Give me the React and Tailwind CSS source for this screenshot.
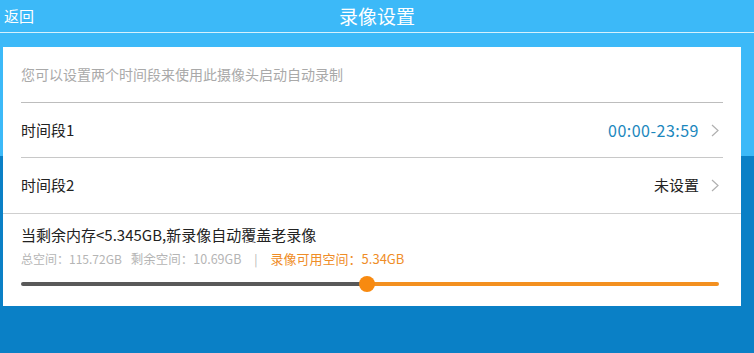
import React from "react";

function Chevron() {
  return (
    <svg width="8" height="13" viewBox="0 0 8 13" className="ml-[12px]">
      <path d="M1 1 L7 6.5 L1 12" fill="none" stroke="#b0b0b0" strokeWidth="1.2" />
    </svg>
  );
}

export default function App() {
  return (
    <div
      className="w-[754px] h-[353px] overflow-hidden bg-[linear-gradient(to_bottom,#3cb9f8_156px,#0a80c6_156px)]"
      style={{ fontFamily: '"Noto Sans CJK SC", "Noto Sans", sans-serif' }}
    >
      {/* header */}
      <div className="relative h-[33px] flex items-center justify-center border-b border-[#d6f1fd]">
        <span className="absolute left-[4px] top-[5px] text-[15px] text-white leading-[22px]">返回</span>
        <span className="text-[19px] text-white leading-[26px]">录像设置</span>
      </div>

      {/* card */}
      <div className="ml-[3px] mt-[14px] w-[738px] h-[259px] bg-white flex flex-col">
        <div className="mx-[18px] h-[56px] flex items-center border-b border-[#bdbdbd] text-[14px] text-[#a9a9a9]">
          您可以设置两个时间段来使用此摄像头启动自动录制
        </div>

        <div className="mx-[18px] h-[55px] flex items-center border-b border-[#c8c8c8]">
          <span className="text-[15px] text-[#222]">时间段1</span>
          <span className="ml-auto text-[16px] tracking-[0.5px] text-[#1b87bd]">00:00-23:59</span>
          <Chevron />
          <span className="w-[4px]" />
        </div>

        <div className="h-[56px] border-b border-[#cfcfcf] px-[18px] flex items-center">
          <span className="text-[15px] text-[#222]">时间段2</span>
          <span className="ml-auto text-[15px] text-[#222]">未设置</span>
          <Chevron />
          <span className="w-[4px]" />
        </div>

        <div className="px-[18px] pt-[9px] flex flex-col">
          <div className="text-[15px] text-[#222] leading-[24px]">当剩余内存&lt;5.345GB,新录像自动覆盖老录像</div>
          <div className="mt-[2px] text-[12px] leading-[20px] text-[#b5b5b5] flex items-baseline">
            <span>总空间：115.72GB</span>
            <span className="ml-[9px] text-[12.5px]">剩余空间：10.69GB</span>
            <span className="mx-[13px]">|</span>
            <span className="text-[13px] text-[#ef8d27]">录像可用空间：5.34GB</span>
          </div>
          <div className="relative mt-[7px] h-[16px] mr-[4px] flex items-center">
            <div className="h-[4px] w-[346px] rounded-l-full bg-[#595959]" />
            <div className="h-[4px] flex-1 rounded-r-full bg-[#f39020]" />
            <div className="absolute left-[338px] top-0 w-[16px] h-[16px] rounded-full bg-[#f88a10]" />
          </div>
        </div>
      </div>
    </div>
  );
}
